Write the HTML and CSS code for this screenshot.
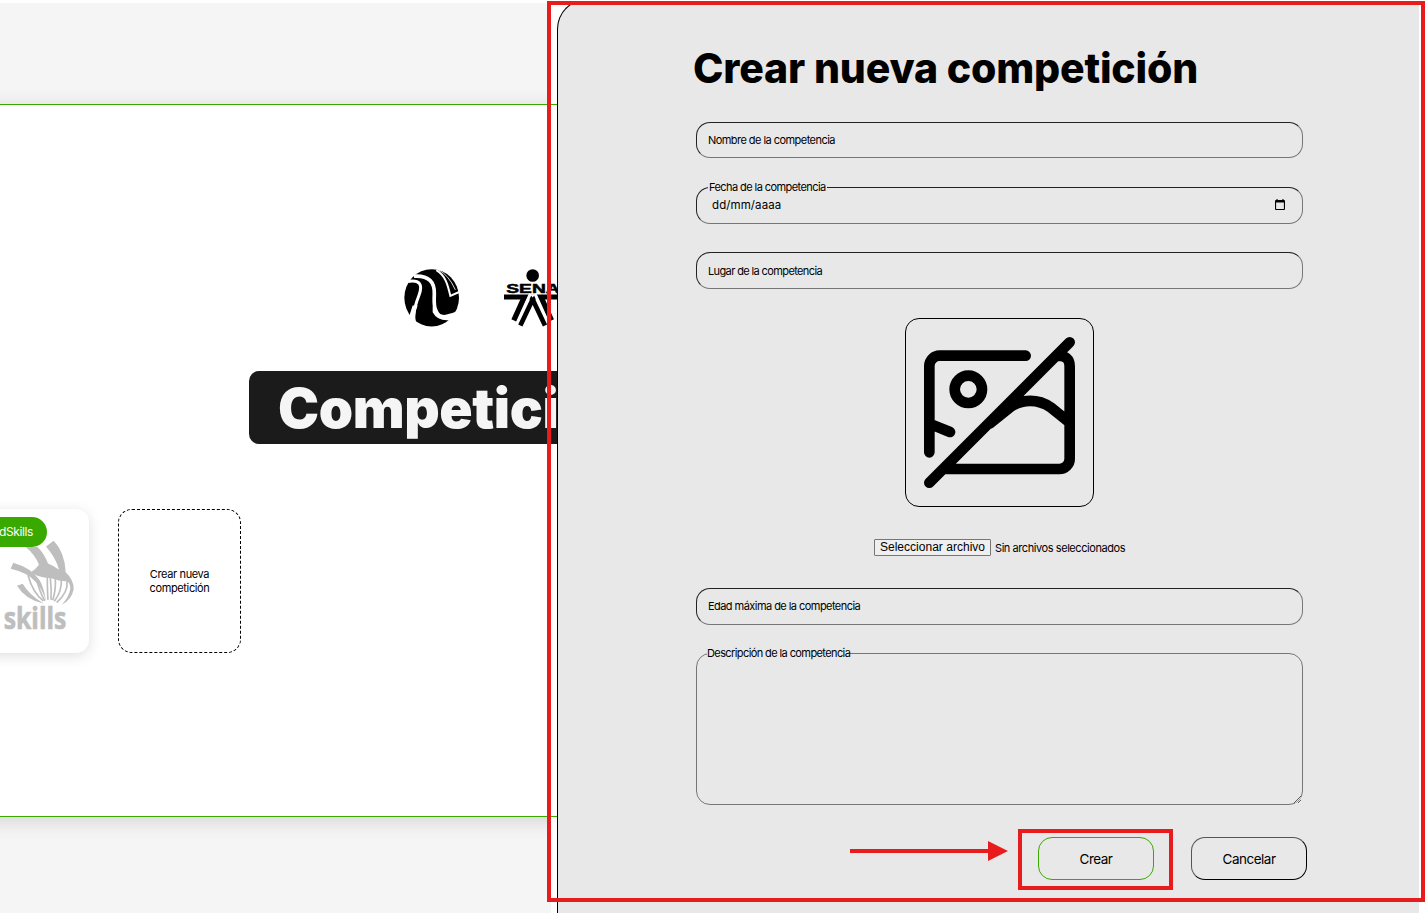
FILE: index.html
```html
<!DOCTYPE html>
<html lang="es">
<head>
<meta charset="utf-8">
<title>Crear nueva competición</title>
<link rel="stylesheet" href="styles.css">
</head>
<body>
<div class="app">
  <div class="page">
    <header class="band"></header>
    <main class="content">
      <div class="logos">
        <svg class="logo" viewBox="66 50 180 185">
          <ellipse cx="155" cy="142" rx="82" ry="86"/>
          <path class="cut" d="M158 168Q176 202 208 190Q228 186 241 174L240 208L205 209Q172 211 158 185ZM98 165L113 165Q102 190 108 216L97 222L88 196Z"/>
          <path class="line" stroke-width="9" d="M84 93C120 87 129 103 117 134C108 157 103 170 101 195"/>
          <path class="line" stroke-width="11" d="M102 77C148 74 164 96 163 130C162 158 160 180 182 200"/>
          <path class="line" stroke-width="6" d="M169 59C197 75 204 106 211 136L241 123"/>
          <path class="line" stroke-width="2.5" d="M174 57Q206 73 226 118"/>
        </svg>
        <svg class="logo" viewBox="366 50 180 185">
          <circle cx="458" cy="75" r="19"/>
          <text class="sena" x="379" y="126" textLength="160" lengthAdjust="spacingAndGlyphs">SENA</text>
          <path d="M372 132H544V147H372Z"/>
          <path class="leg" stroke-width="17" d="M433 141L402 210M483 141L514 210"/>
          <path class="line" stroke-width="9" d="M451 130L412 216M465 130L504 216"/>
          <path class="leg" stroke-width="14" d="M459 145L421 225M457 145L495 225"/>
          <path class="cut" d="M450 131H466L458 141Z"/>
        </svg>
      </div>
      <h1 class="banner">Competiciones</h1>
      <div class="cards">
        <article class="card">
          <span class="pill">WorldSkills</span>
          <svg class="skills" viewBox="0 120 240 290">
            <path d="M76 155H112Q132 174 144 205Q164 213 177 224Q169 190 138 154L161 137Q194 171 197 231Q222 254 221 282Q216 312 185 329Q207 306 211 281Q211 260 198 258L176 256Q150 246 136 248Q110 243 92 232Q105 225 117 209Q104 177 76 155Z"/>
            <path d="M40 203Q94 219 118 254Q130 272 138 317Q124 276 105 258Q80 232 32 221Z"/>
            <path d="M68 266Q88 300 131 325Q77 315 51 272Z"/>
            <path class="ray" d="M84 240Q98 292 130 317M108 246Q120 296 135 317M142 246Q142 290 144 314M151 248Q155 285 153 314M166 250Q168 285 158 315M184 254Q186 288 163 318M201 258Q205 292 170 322"/>
            <text class="skills-word" x="11" y="403" textLength="188" lengthAdjust="spacingAndGlyphs">skills</text>
          </svg>
        </article>
        <a class="new-card">Crear nueva<br>competición</a>
      </div>
    </main>
    <footer class="band foot"></footer>
    <div class="gutter"></div>
  </div>

  <section class="panel">
    <form class="form">
      <h2 class="title">Crear nueva competición</h2>
      <div class="field">Nombre de la competencia</div>
      <div class="field date">
        <span class="label">Fecha de la competencia</span>
        <span class="mask">dd/mm/aaaa</span>
        <svg class="calendar" viewBox="0 0 10 11"><path d="M1 1H9Q10 1 10 2V10Q10 11 9 11H1Q0 11 0 10V2Q0 1 1 1ZM1.1 3.6V9.9H8.9V3.6ZM1.5 0H2.6V1H1.5ZM7.4 0H8.5V1H7.4Z" fill-rule="evenodd"/></svg>
      </div>
      <div class="field place">Lugar de la competencia</div>
      <div class="preview">
        <svg viewBox="33 27 561 561">
          <path d="M392 137H134A31 31 0 0 0 103 168V427M103 341L165 366M103 518L524 97M488 137Q524 137 524 168V446A31 31 0 0 1 493 477H150M285 340L345 292C380 266 430 266 467 292L524 338"/>
          <circle cx="220" cy="238" r="41"/>
        </svg>
      </div>
      <div class="file"><button type="button" class="file-btn">Seleccionar archivo</button><span class="file-name">Sin archivos seleccionados</span></div>
      <div class="field age">Edad máxima de la competencia</div>
      <div class="area"><span class="label area-label">Descripción de la competencia</span><textarea class="textarea"></textarea></div>
      <div class="actions">
        <button type="button" class="btn create">Crear</button>
        <button type="button" class="btn cancel">Cancelar</button>
      </div>
    </form>
  </section>
</div>
<div class="mark mark-panel"></div>
<div class="mark mark-button"></div>
<svg class="arrow" viewBox="0 0 158 20"><path d="M0 8H138V0L158 10L138 20V12H0Z"/></svg>
</body>
</html>
```
FILE: styles.css
```css
* { box-sizing: border-box; }
body {
  margin: 0;
  height: 913px;
  padding: 3px 7px 0 0;
  overflow: hidden;
  position: relative;
  background: #fff;
  color: #000;
  font-family: Inter, "Liberation Sans", sans-serif;
}
.app { display: grid; grid-template-columns: 557px 862px; height: 910px; overflow: hidden; }

.page { position: relative; display: grid; grid-template-rows: 101px 713px 1fr; overflow: hidden; }
.band { background: #f5f5f5; }
.content {
  position: relative;
  margin: 0 -30px;
  padding: 0 30px;
  background: #fff;
  border-top: 1px solid #39a900;
  border-bottom: 1px solid #39a900;
  box-shadow: 0 4px 18px rgba(0, 0, 0, .14);
}
.gutter {
  position: absolute; right: 0; top: 0; width: 6px; height: 100%;
  background: linear-gradient(#fff 0 101px, transparent 101px 814px, #fff 814px);
}
.logos { display: flex; gap: 40px; padding: 162px 0 0 402px; }
.logo { width: 60px; height: 62px; flex: none; }
.cut { fill: #fff; }
.line { fill: none; stroke: #fff; }
.leg { fill: none; stroke: #000; }
.sena { font: bold 37px "Liberation Sans", sans-serif; stroke: #000; stroke-width: 1.5; }
.banner {
  width: 440px; height: 73px;
  margin: 42px 0 0 249px;
  padding-left: 29px;
  border-radius: 10px;
  background: #1b1b1b;
  color: #f5f5f5;
  font-size: 55px; font-weight: 900; line-height: 74px; letter-spacing: -.4px;
}
.cards { display: flex; gap: 29px; margin: 65px 0 0 -34px; }
.card {
  width: 123px; height: 144px;
  padding: 8px 0 0;
  border-radius: 13px;
  background: #fff;
  box-shadow: 0 3px 14px rgba(0, 0, 0, .13);
}
.pill {
  position: relative; z-index: 1;
  display: block; width: 81px; height: 30px;
  padding-right: 14px;
  border-radius: 15px;
  background: #39a900; color: #fff;
  font-size: 12px; line-height: 30px; text-align: right; letter-spacing: -.4px;
}
.skills { display: block; width: 80px; height: 97px; margin: -12px 0 0 34px; fill: #bebebe; }
.ray { fill: none; stroke: #bebebe; stroke-width: 5; }
.skills-word { font: bold 92px "Open Sans", sans-serif; stroke: #bebebe; stroke-width: 2; }
.new-card {
  display: flex; align-items: center; justify-content: center;
  width: 123px; height: 144px;
  border: 1px dashed #000; border-radius: 14px;
  font-size: 11px; line-height: 14px; letter-spacing: -.37px; text-align: center;
}

.panel {
  border-left: 1px solid #000;
  border-top: 1px solid #000;
  border-top-left-radius: 30px;
  margin-top: -4px;
  background: #e8e8e8;
}
.form { display: flex; flex-direction: column; width: 611px; margin-left: 138px; padding-top: 43px; }
.title { margin: 0 0 29px -3px; font-size: 41px; line-height: 50px; font-weight: 800; letter-spacing: -.17px; white-space: nowrap; }
.field {
  position: relative;
  display: flex; align-items: center;
  width: 607px; height: 37px;
  padding: 0 11px;
  border: 1px solid; border-color: #222 #767676 #767676 #222;
  border-radius: 14px;
  font-size: 11px; letter-spacing: -.55px;
}
.field:nth-child(2) { height: 36px; }
.date { margin-top: 29px; padding: 0 17px 2px 15px; justify-content: space-between; }
.label {
  position: absolute; left: 11px; top: -8px;
  padding: 0 1px 0 1px;
  background: #e8e8e8;
  font-size: 11px; line-height: 14px; letter-spacing: -.58px; white-space: nowrap;
}
.mask { font-size: 11.5px; letter-spacing: .1px; }
.calendar { width: 10px; height: 11px; }
.place { margin-top: 28px; letter-spacing: -.62px; }
.preview {
  width: 189px; height: 189px;
  margin: 29px 0 0 209px;
  border: 1px solid #000; border-radius: 14px;
}
.preview svg { display: block; width: 187px; height: 187px; fill: none; stroke: #000; stroke-width: 32; stroke-linecap: round; }
.file { display: flex; align-items: center; gap: 4px; height: 17px; margin: 32px 0 0 178px; }
.file-btn {
  width: 117px; height: 17px; padding: 0 0 1px;
  border: 1px solid #767676; border-radius: 1px;
  background: #efefef; color: #000;
  font: 12px/14px "Liberation Sans", sans-serif; letter-spacing: .02px;
}
.file-name { font-size: 11px; letter-spacing: -.43px; white-space: nowrap; }
.age { margin-top: 32px; padding-bottom: 1px; }
.area { position: relative; height: 152px; margin-top: 28px; }
.area-label { top: -7px; padding: 0; letter-spacing: -.6px; }
.textarea {
  display: block; width: 607px; height: 152px;
  border: 1px solid #767676; border-radius: 14px;
  background: transparent; resize: both;
}
.actions { display: flex; justify-content: flex-end; gap: 37px; margin-top: 32px; }
.btn {
  width: 116px; height: 43px; padding: 0;
  border: 1px solid #39a900; border-radius: 14px;
  background: transparent; color: #000;
  font: 13.5px Inter, sans-serif; letter-spacing: -.5px;
}
.cancel { border-color: #555 #000 #000 #555; }

/* Highlight frames and arrow drawn over the screen */
.mark { position: absolute; border: 4px solid #e81c1c; }
.mark-panel { left: 547px; top: 1px; width: 878px; height: 901px; }
.mark-button { left: 1018px; top: 829px; width: 155px; height: 61px; }
.arrow { position: absolute; left: 850px; top: 841px; width: 158px; height: 20px; fill: #e81c1c; }
```
